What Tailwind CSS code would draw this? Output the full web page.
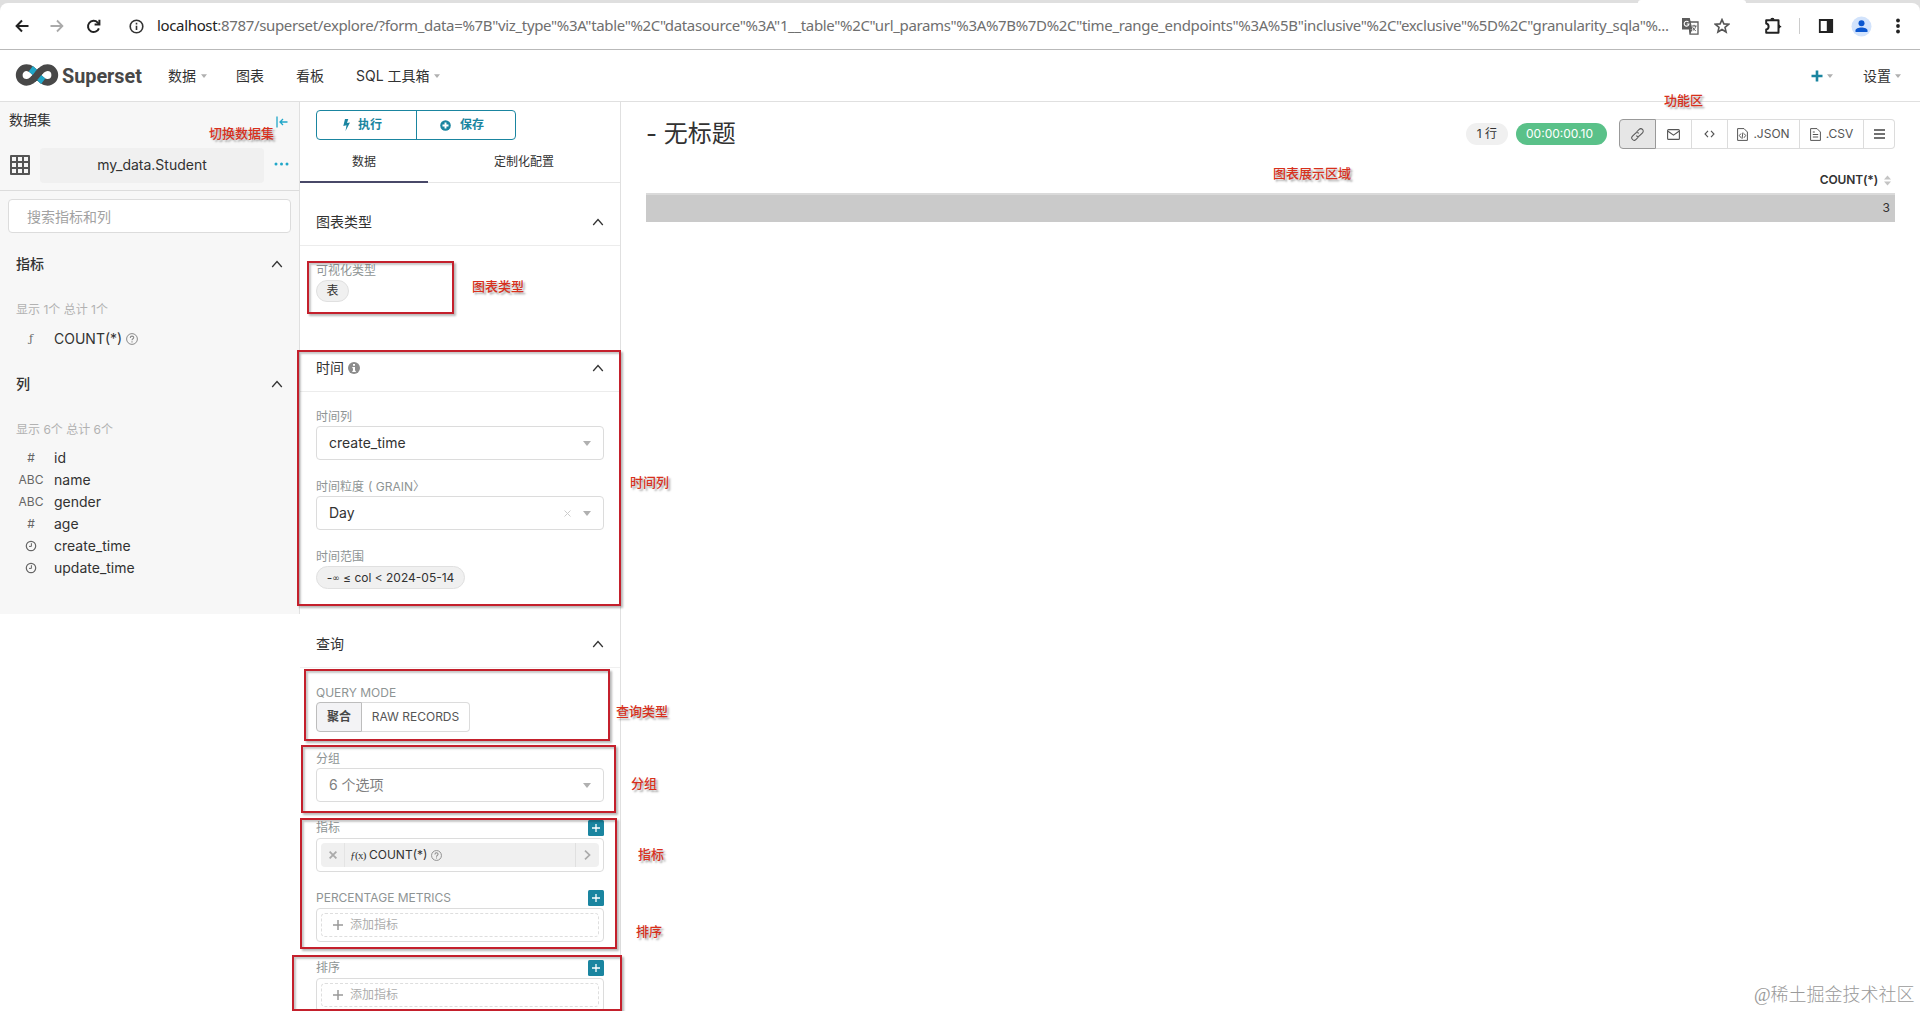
<!DOCTYPE html>
<html lang="zh">
<head>
<meta charset="utf-8">
<title>Superset</title>
<script src="https://cdn.jsdelivr.net/npm/@tailwindcss/browser@4"></script>
</head>
<body class="relative h-[1011px] w-[1920px] overflow-hidden bg-white font-[Inter,'Noto_Sans_CJK_SC',sans-serif] text-sm leading-none text-[#323232]">
<svg class="hidden">
  <symbol id="chev" viewBox="0 0 12 8"><path d="M1.2 7 6 1.6 10.8 7" fill="none" stroke="#333" stroke-width="1.3"/></symbol>
  <symbol id="caret" viewBox="0 0 8 5"><path d="M0 0h8L4 5z" fill="#b0b0b0"/></symbol>
  <symbol id="help" viewBox="0 0 12 12"><circle cx="6" cy="6" r="5.4" fill="none" stroke="#8a8a8a"/><path d="M4.3 4.9C4.3 2.5 7.8 2.6 7.7 4.7 7.6 5.8 6 5.8 6 7.3M6 8.2v1.2" fill="none" stroke="#8a8a8a" stroke-width="1.1"/></symbol>
  <symbol id="clock" viewBox="0 0 12 12"><circle cx="6" cy="6" r="4.7" fill="none" stroke="#666" stroke-width="1.2"/><path d="M6.4 3.2v3.2H4" fill="none" stroke="#666"/></symbol>
  <symbol id="plus" viewBox="0 0 16 16"><rect width="16" height="16" rx="1.5" fill="#1a85a0"/><path d="M8 4v8M4 8h8" stroke="#fff" stroke-width="1.3"/></symbol>
</svg>

<!-- browser toolbar -->
<header class="h-[50px] border-b border-[#b9b9b9] bg-[#dfdfdf] pt-[3px]">
  <div class="flex h-full items-center rounded-t-lg bg-white pl-[15px]">
    <svg class="mr-[21px] size-[14px]" viewBox="0 0 14 14" fill="none" stroke="#222" stroke-width="2"><path d="M13.5 7H2M7 1.5 1.6 7 7 12.5"/></svg>
    <svg class="mr-[22px] size-[14px]" viewBox="0 0 14 14" fill="none" stroke="#aaa" stroke-width="1.8"><path d="M.5 7H12M7 1.5 12.4 7 7 12.5"/></svg>
    <svg class="mr-[28px] size-[15px]" viewBox="0 0 15 15" fill="none" stroke="#222" stroke-width="2"><path d="M12.9 9.3A5.6 5.6 0 1 1 11.7 3.6L13.4 5.3"/><path d="M13.4.8v4.8H8.6"/></svg>
    <svg class="mr-[12px] size-[15px]" viewBox="0 0 15 15" fill="none" stroke="#333" stroke-width="1.6"><circle cx="7.5" cy="7.5" r="6.3"/><path d="M7.5 6.7v4.2M7.5 3.8v1.6"/></svg>
    <svg class="h-[30px] w-[1513px] font-['Noto_Sans'] text-[15px]" fill="#6f6f6f"><text x="1" y="20" textLength="1512" lengthAdjust="spacing"><tspan fill="#222">localhost</tspan>:8787/superset/explore/?form_data=%7B"viz_type"%3A"table"%2C"datasource"%3A"1__table"%2C"url_params"%3A%7B%7D%2C"time_range_endpoints"%3A%5B"inclusive"%2C"exclusive"%5D%2C"granularity_sqla"%...</text></svg>
    <svg class="ml-[12px] size-[18px]" viewBox="0 0 18 18"><path d="M8 5h9v12.2H9z" fill="#fff" stroke="#5c5c5c" stroke-width="1.3"/><path d="M1 1h7.8l2.6 11.5H1z" fill="#5c5c5c"/><path d="M7.5 5.2A2.4 2.4 0 1 0 8 7H5.7" fill="none" stroke="#fff" stroke-width="1.1"/><path d="M10.8 9h4.8M13.1 7.8V9M14.8 9c-.4 2-1.6 3.6-3 4.6M11.6 10.2c.8 1.6 1.8 2.8 3.2 3.6" fill="none" stroke="#5c5c5c"/><path d="m8 12.5 1.2 4.5 2.3-4.5z" fill="#5c5c5c"/></svg>
    <svg class="ml-[15px] size-[16px]" viewBox="0 0 16 16" fill="none" stroke="#555" stroke-width="1.6"><path d="m8 1.6 1.9 4.3 4.7.4-3.6 3.1 1.1 4.6L8 11.5 3.900 14 5 9.400 1.400 6.300l4.700-.4z"/></svg>
    <svg class="ml-[34px] size-[18px]" viewBox="0 0 18 18" fill="none" stroke="#222" stroke-width="2" stroke-linejoin="round"><path d="M2.200 3.200h12.300v12.600H2.200v-3.300c3.200-.5 3.200-5.500 0-6z"/><path d="M6.300 2.800a2.100 2.100 0 0 1 4.200 0zM15 7.600a2.100 2.100 0 0 1 0 4z" fill="#222" stroke="none"/><path d="M8.400 1.300v1M16.200 8.900v1.400"/></svg>
    <div class="ml-[17px] h-4 w-px bg-[#ccc]"></div>
    <svg class="ml-[18px] size-[16px]" viewBox="0 0 16 16"><path d="M1.800 2h12.400v12H1.800z" fill="none" stroke="#222" stroke-width="1.800"/><path d="M8.800 2h5.400v12H8.800z" fill="#222"/></svg>
    <svg class="ml-[17px] size-[21px]" viewBox="0 0 21 21"><circle cx="10.500" cy="10.500" r="10" fill="#d2e3fc"/><circle cx="10.500" cy="7.300" r="3" fill="#0b57d0"/><path d="M4.500 16v-1.500c0-4 12-4 12 0V16z" fill="#0b57d0"/></svg>
    <svg class="ml-[23px] h-4 w-[6px]" fill="#222"><circle cx="3" cy="2.500" r="1.900"/><circle cx="3" cy="8" r="1.900"/><circle cx="3" cy="13.500" r="1.900"/></svg>
  </div>
</header>
<div class="absolute top-0 left-[1638px] h-[3px] w-[108px] rounded-t-sm bg-white"></div>

<!-- application navigation -->
<nav class="flex h-[52px] items-center border-b border-[#e0e0e0] pl-[15px]">
  <svg class="mb-[2px] h-[24px] w-[44px]" viewBox="0 0 44 24" fill="none" stroke-width="6.800"><path d="M22 12C18 7 15.500 4.700 11.500 4.700A7.300 7.300 0 0 0 11.500 19.300C15.500 19.300 18 17 22 12C26 7 28.500 4.700 32.500 4.700A7.300 7.300 0 0 1 32.500 19.300C28.500 19.300 26 17 22 12Z" stroke="#484848"/><path d="M15.800 5.800C18.500 7.800 20 9.500 22 12C24 14.500 25.500 16.200 28.200 18.200" stroke="#20a7c9"/><path d="M18 16.500C19.500 15 20.500 14 22 12C23.500 10 24.500 9 26 7.500" stroke="#484848"/></svg>
  <div class="ml-[3px] h-[26px] w-[82px] origin-left scale-x-[.99] font-[Roboto] text-[20px] leading-[26px] font-bold text-[#484848]">Superset</div>
  <span class="ml-[24px] w-7">数据</span><svg class="ml-[5px] h-[4px] w-[6px]"><use href="#caret"/></svg>
  <span class="ml-[29px] w-7">图表</span>
  <span class="ml-[32px] w-7">看板</span>
  <span class="ml-[32px] w-[74px] whitespace-nowrap">SQL 工具箱</span><svg class="ml-[4px] h-[4px] w-[6px]"><use href="#caret"/></svg>
  <svg class="ml-auto size-[12px]" viewBox="0 0 12 12"><path d="M6 .5v11M.5 6h11" stroke="#1a85a0" stroke-width="2.600"/></svg><svg class="ml-[4px] h-[4px] w-[6px]"><use href="#caret"/></svg>
  <span class="ml-[30px] w-7">设置</span><svg class="mr-[19px] ml-[4px] h-[4px] w-[6px]"><use href="#caret"/></svg>
</nav>

<main class="flex h-[909px]">
  <!-- dataset sidebar -->
  <aside class="h-[512px] w-[300px] shrink-0 border-r border-[#e0e0e0] bg-[#f7f7f7]">
    <div class="flex h-[37px] items-center justify-between pr-[11px] pb-[2px] pl-[9px]"><span>数据集</span>
      <svg class="mt-1 h-[12px] w-[12px]" viewBox="0 0 12 12" fill="none" stroke="#20a7c9" stroke-width="1.300"><path d="M1 .5v11M11.500 6H4M7 3 4 6l3 3"/></svg></div>
    <div class="flex h-[52px] items-center border-b border-[#dcdcdc] pt-px pl-[10px]">
      <svg class="size-[20px]" viewBox="0 0 20 20"><rect width="20" height="20" rx="1" fill="#555"/><path d="M2 2h4v4H2zM8 2h4v4H8zM14 2h4v4h-4zM2 8h4v4H2zM8 8h4v4H8zM14 8h4v4h-4zM2 14h4v4H2zM8 14h4v4H8zM14 14h4v4h-4z" fill="#f7f7f7"/></svg>
      <div class="ml-[10px] flex h-[35px] w-[224px] items-center justify-center rounded bg-[#f0f0f0]">my_data.Student</div>
      <svg class="mb-[3px] ml-[10px] h-[4px] w-[15px]" fill="#20a7c9"><circle cx="2" cy="2" r="1.500"/><circle cx="7.500" cy="2" r="1.500"/><circle cx="13" cy="2" r="1.500"/></svg>
    </div>
    <div class="mx-2 mt-2 flex h-[34px] w-[283px] items-center rounded border border-[#dcdcdc] bg-white pt-[2px] pl-[18px] text-[#a2a2a2]">搜索指标和列</div>
    <div class="mt-[16px] flex h-[30px] items-center justify-between pr-[16px] pl-4 font-medium"><span>指标</span><svg class="h-[8px] w-[12px]"><use href="#chev"/></svg></div>
    <div class="mt-[20px] flex h-[20px] items-center pt-[2px] pl-4 text-xs text-[#b2b2b2]">显示 1个 总计 1个</div>
    <div class="mt-2 flex h-[22px] items-center pt-px"><span class="w-[54px] pl-[29px] font-['DejaVu_Serif'] text-[11px] text-[#666]">ƒ</span>COUNT(*)<svg class="ml-[4px] size-[12px]"><use href="#help"/></svg></div>
    <div class="mt-[20px] flex h-[30px] items-center justify-between pr-[16px] pl-4 font-medium"><span>列</span><svg class="h-[8px] w-[12px]"><use href="#chev"/></svg></div>
    <div class="mt-[20px] mb-2 flex h-[20px] items-center pt-[2px] pl-4 text-xs text-[#b2b2b2]">显示 6个 总计 6个</div>
    <div class="grid auto-rows-[22px] grid-cols-[46px_1fr] items-center gap-x-2 [&>i]:justify-self-center [&>i]:pl-4 [&>i]:text-xs [&>i]:text-[#666] [&>i]:not-italic">
      <i>#</i><b class="font-normal">id</b>
      <i>ABC</i><b class="font-normal">name</b>
      <i>ABC</i><b class="font-normal">gender</b>
      <i>#</i><b class="font-normal">age</b>
      <i><svg class="size-[12px]"><use href="#clock"/></svg></i><b class="font-normal">create_time</b>
      <i><svg class="size-[12px]"><use href="#clock"/></svg></i><b class="font-normal">update_time</b>
    </div>
  </aside>

  <!-- query controls -->
  <section class="w-[321px] shrink-0 overflow-hidden border-r border-[#e0e0e0]">
    <div class="mt-2 ml-4 flex h-[30px] w-[200px] rounded border border-[#1a85a0] text-xs font-bold text-[#1a85a0]">
      <div class="flex w-[100px] items-center border-r border-[#1a85a0] pl-[26px]"><svg class="mr-[8px] h-[12px] w-[7px]" viewBox="0 0 7 12"><path d="M2 0h3.300L4 4l3-.6L2.500 12l1-5.800L.3 7z" fill="#1a85a0"/></svg>执行</div>
      <div class="flex items-center pl-[23px]"><svg class="mr-[9px] size-[11px]" viewBox="0 0 11 11"><circle cx="5.500" cy="5.500" r="5.300" fill="#1a85a0"/><path d="M5.500 2.500v6M2.500 5.500h6" stroke="#fff" stroke-width="1.900"/></svg>保存</div>
    </div>
    <div class="flex h-[43px] border-b border-[#e6e6e6] text-xs">
      <div class="flex h-[43px] w-[128px] items-center justify-center border-b-2 border-[#484868] pt-[2px]">数据</div>
      <div class="flex w-[192px] items-center justify-center pt-px">定制化配置</div>
    </div>
    <div class="mt-[15px] flex h-[48px] items-center justify-between border-b border-[#ececec] pr-[16px] pl-4"><span>图表类型</span><svg class="h-[8px] w-[12px]"><use href="#chev"/></svg></div>
    <div class="mt-[14px] flex h-[20px] items-center pt-[2px] pl-4 text-xs text-[#8e9494]">可视化类型</div>
    <div class="ml-4 flex h-[22px] w-[33px] items-center justify-center rounded-full border border-[#e0e0e0] bg-[#f0f0f0] text-xs">表</div>

    <div class="mt-[42px] flex h-[48px] items-center border-b border-[#ececec] pr-[16px] pl-4"><span>时间</span><svg class="ml-[4px] size-[12px]" viewBox="0 0 12 12"><circle cx="6" cy="6" r="6" fill="#8c8c8c"/><path d="M5 2h2v1.800H5zM4.300 5H7v3.800h.8V10H4.300V8.800H5V6.200h-.7z" fill="#fff"/></svg><svg class="ml-auto h-[8px] w-[12px]"><use href="#chev"/></svg></div>
    <div class="mt-[14px] flex h-[20px] items-center pt-[2px] pl-4 text-xs text-[#8e9494]">时间列</div>
    <div class="ml-4 flex h-[34px] w-[288px] items-center justify-between rounded border border-[#dcdcdc] pr-[12px] pl-[12px]">create_time<svg class="h-[5px] w-[8px]"><use href="#caret"/></svg></div>
    <div class="mt-[16px] flex h-[20px] items-center pt-[2px] pl-4 text-xs text-[#8e9494]">时间粒度<span class="ml-[4px]">( GRAIN</span>〉</div>
    <div class="ml-4 flex h-[34px] w-[288px] items-center rounded border border-[#dcdcdc] pr-[12px] pl-[12px]">Day<svg class="ml-auto size-[7px]" viewBox="0 0 7 7"><path d="m.5.5 6 6m0-6-6 6" stroke="#ccc"/></svg><svg class="ml-[12px] h-[5px] w-[8px]"><use href="#caret"/></svg></div>
    <div class="mt-[16px] flex h-[20px] items-center pt-[2px] pl-4 text-xs text-[#8e9494]">时间范围</div>
    <div class="ml-4 flex h-[23px] w-[149px] items-center justify-center rounded-full border border-[#e0e0e0] bg-[#f0f0f0] text-xs whitespace-pre">-<span class="font-['DejaVu_Sans'] text-[9px]">∞</span> ≤ col &lt; 2024-05-14</div>

    <div class="mt-[31px] flex h-[48px] items-center justify-between border-b border-[#f0f0f0] pr-[16px] pl-4"><span>查询</span><svg class="h-[8px] w-[12px]"><use href="#chev"/></svg></div>
    <div class="mt-[14px] flex h-[20px] items-center pt-px pl-4 text-xs text-[#8e9494]">QUERY MODE</div>
    <div class="ml-4 flex h-[30px] w-[154px] text-xs">
      <div class="flex w-[46px] items-center justify-center rounded-l border border-[#bdbdbd] bg-[#f3f3f5] font-bold text-[#484848]">聚合</div>
      <div class="flex w-[108px] items-center justify-center rounded-r border border-l-0 border-[#dcdcdc] text-[#555]">RAW RECORDS</div>
    </div>
    <div class="mt-[16px] flex h-[20px] items-center pt-px pl-4 text-xs text-[#8e9494]">分组</div>
    <div class="ml-4 flex h-[34px] w-[288px] items-center justify-between rounded border border-[#dcdcdc] pr-[12px] pl-[12px] text-[#808080]">6 个选项<svg class="h-[5px] w-[8px]"><use href="#caret"/></svg></div>
    <div class="mt-[16px] flex h-[20px] items-center justify-between pr-4 pb-px pl-4 text-xs text-[#8e9494]">指标<svg class="size-[16px]"><use href="#plus"/></svg></div>
    <div class="ml-4 flex h-[34px] w-[288px] items-center rounded border border-[#dcdcdc] px-1">
      <div class="flex h-6 w-full items-center rounded-sm bg-[#f0f0f0] text-xs">
        <div class="flex h-full w-6 items-center justify-center border-r border-[#e4e4e4]"><svg class="size-[8px]" viewBox="0 0 8 8"><path d="m.6.6 6.800 6.800m0-6.800L.6 7.400" stroke="#aaa" stroke-width="1.800"/></svg></div>
        <span class="ml-[5px] w-[19px] font-['Liberation_Serif'] text-[11px] tracking-[-0.6px]"><i>ƒ</i>(x)</span>COUNT(*)<svg class="ml-[4px] size-[11px]" viewBox="0 0 12 12"><use href="#help"/></svg>
        <div class="ml-auto flex h-full w-6 items-center justify-center border-l border-[#e0e0e0]"><svg class="h-[10px] w-[7px]" viewBox="0 0 7 10"><path d="m1 .7 4.500 4.300L1 9.300" fill="none" stroke="#aaa" stroke-width="1.700"/></svg></div>
      </div>
    </div>
    <div class="mt-[16px] flex h-[20px] items-center justify-between pr-4 pb-px pl-4 text-xs text-[#8e9494]">PERCENTAGE METRICS<svg class="size-[16px]"><use href="#plus"/></svg></div>
    <div class="ml-4 flex h-[34px] w-[288px] items-center rounded border border-[#dcdcdc] px-1">
      <div class="flex h-6 w-full items-center rounded-sm border border-dashed border-[#dedede] pl-[11px] text-xs text-[#adadad]"><svg class="mr-[7px] size-[10px]" viewBox="0 0 10 10"><path d="M5 0v10M0 5h10" stroke="#999" stroke-width="1.500"/></svg>添加指标</div>
    </div>
    <div class="mt-[16px] flex h-[20px] items-center justify-between pr-4 pb-px pl-4 text-xs text-[#8e9494]">排序<svg class="size-[16px]"><use href="#plus"/></svg></div>
    <div class="ml-4 flex h-[34px] w-[288px] items-center rounded border border-[#dcdcdc] px-1">
      <div class="flex h-6 w-full items-center rounded-sm border border-dashed border-[#dedede] pl-[11px] text-xs text-[#adadad]"><svg class="mr-[7px] size-[10px]" viewBox="0 0 10 10"><path d="M5 0v10M0 5h10" stroke="#999" stroke-width="1.500"/></svg>添加指标</div>
    </div>
  </section>

  <!-- chart -->
  <section class="flex-1 pr-[25px] pl-[25px]">
    <div class="mt-[17px] flex h-[30px] items-center text-xs">
      <h1 class="flex-1 text-2xl leading-none">- 无标题</h1>
      <span class="flex h-[22px] w-[42px] items-center justify-center rounded-full bg-[#f0f0f0]">1 行</span>
      <span class="mr-[12px] ml-[8px] flex h-[22px] w-[91px] items-center justify-center rounded-full bg-[#5ac189] pr-1 text-white">00:00:00.10</span>
      <div class="flex h-[30px] text-[#555] [&>div]:flex [&>div]:items-center [&>div]:justify-center [&>div]:border-y [&>div]:border-r [&>div]:border-[#dcdcdc]">
        <div class="w-[37px] rounded-l border-l border-[#999]! bg-[#e6e6e6]"><svg class="size-[13px]" viewBox="0 0 14 14" fill="none" stroke="#555" stroke-width="1.100"><path d="m6 4.300 2.800-2.700a2.500 2.500 0 0 1 3.600 3.600L9.300 8.300a2.500 2.500 0 0 1-3.600 0M8 9.700l-2.800 2.700a2.500 2.500 0 0 1-3.600-3.600L4.700 5.700a2.500 2.500 0 0 1 3.600 0"/></svg></div>
        <div class="w-[36px]"><svg class="h-[11px] w-[13px]" viewBox="0 0 13 11" fill="none" stroke="#555" stroke-width="1.100"><rect x=".6" y=".6" width="11.800" height="9.800" rx="1"/><path d="m1 2.300 5.500 3.900L12 2.300"/></svg></div>
        <div class="w-[36px]"><svg class="h-[8px] w-[11px]" viewBox="0 0 12 9" fill="none" stroke="#555" stroke-width="1.300"><path d="M4.300 1 1 4.500 4.300 8M7.700 1 11 4.500 7.700 8"/></svg></div>
        <div class="w-[72px]"><svg class="mr-[5px] h-[13px] w-[11px]" viewBox="0 0 11 13" fill="none" stroke="#555"><path d="M.6.6h6.400l3.400 3.400v8.400H.6zM4 5.500 2.300 7.500 4 9.800M7 5.500l1.700 2L7 9.800M5.900 4.500 5 10.800"/></svg>.JSON</div>
        <div class="w-[64px]"><svg class="mr-[5px] h-[13px] w-[11px]" viewBox="0 0 11 13" fill="none" stroke="#555"><path d="M.6.6h6.400l3.400 3.400v8.400H.6zM2.800 6.500h5.400M2.800 9h5.400M2.800 4h2"/></svg>.CSV</div>
        <div class="w-[31px] rounded-r"><svg class="h-[10px] w-[11px]" stroke="#444" stroke-width="1.700"><path d="M0 1h11M0 5h11M0 9h11"/></svg></div>
      </div>
    </div>
    <div class="mt-[18px] flex h-[28px] items-center justify-end border-b-2 border-[#dadada] pr-[4px] text-xs font-semibold tracking-[-0.15px]">COUNT(*)<svg class="ml-[6px] h-[11px] w-[7px]" viewBox="0 0 7 11"><path d="M0 4.500 3.500.5 7 4.500zM0 6.500h7l-3.500 4z" fill="#c4c4c4"/></svg></div>
    <div class="flex h-[27px] items-center justify-end bg-[#cacaca] pr-[5px] pb-[1px] text-xs">3</div>
  </section>
</main>

<!-- annotation overlay -->
<div class="[&>div]:absolute [&>div]:border-2 [&>div]:border-[#c4202c] [&>div]:shadow-[2px_2px_2px_rgba(0,0,0,.28),inset_2px_2px_2px_rgba(0,0,0,.22)]">
  <div class="top-[261px] left-[307px] h-[53px] w-[147px]"></div>
  <div class="top-[350px] left-[297px] h-[256px] w-[324px]"></div>
  <div class="top-[669px] left-[304px] h-[72px] w-[306px]"></div>
  <div class="top-[745px] left-[301px] h-[68px] w-[315px]"></div>
  <div class="top-[818px] left-[300px] h-[131px] w-[317px]"></div>
  <div class="top-[955px] left-[292px] h-[56px] w-[330px]"></div>
</div>
<div class="text-[13px] font-medium whitespace-nowrap text-[#d8301c] [text-shadow:2px_2px_2px_rgba(0,0,0,.35)] [&>span]:absolute">
  <span class="top-[127px] left-[209px]">切换数据集</span>
  <span class="top-[94px] left-[1664px]">功能区</span>
  <span class="top-[167px] left-[1273px]">图表展示区域</span>
  <span class="top-[280px] left-[472px]">图表类型</span>
  <span class="top-[476px] left-[630px]">时间列</span>
  <span class="top-[705px] left-[616px]">查询类型</span>
  <span class="top-[777px] left-[631px]">分组</span>
  <span class="top-[848px] left-[638px]">指标</span>
  <span class="top-[925px] left-[636px]">排序</span>
</div>
<div class="absolute top-[986px] left-[1754px] font-['Liberation_Serif','Noto_Sans_CJK_SC',serif] text-[18px] font-light whitespace-nowrap text-[#9a9a9a]">@稀土掘金技术社区</div>
</body>
</html>
